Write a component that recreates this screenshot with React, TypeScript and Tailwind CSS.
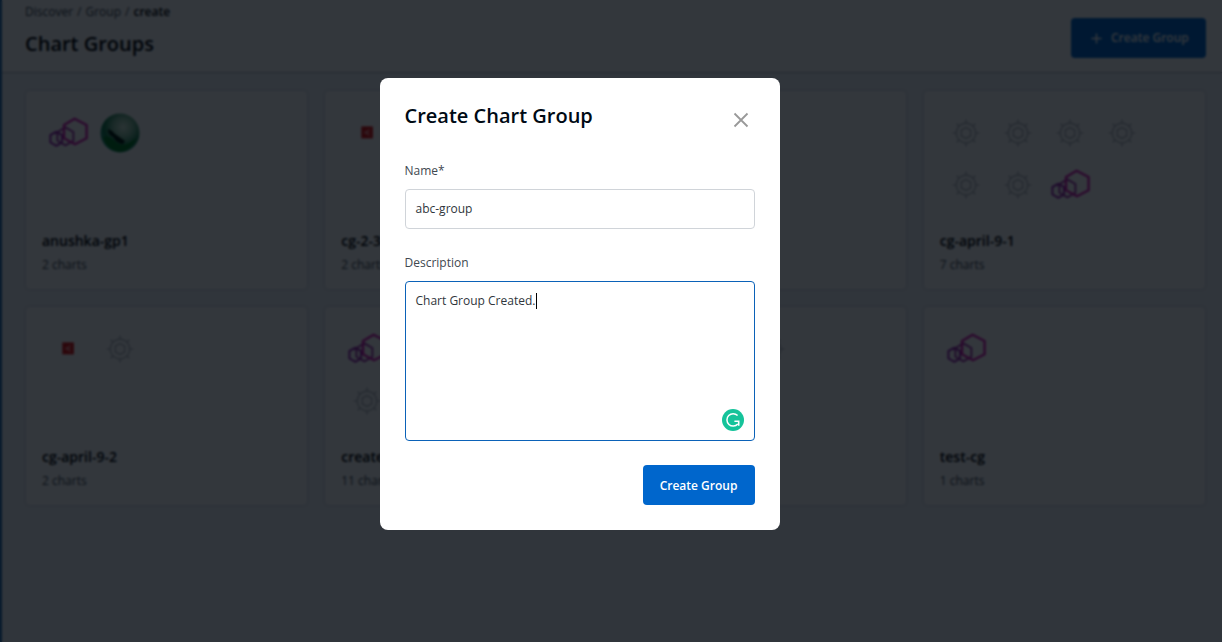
import React from "react";

type IconKind = "hex" | "globe" | "red" | "helm";

interface Group {
  id: number;
  name?: string;
  count?: number;
  icons: IconKind[];
}

const groups: Group[] = [
  { id: 1, name: "anushka-gp1", count: 2, icons: ["hex", "globe"] },
  { id: 2, name: "cg-2-3", count: 2, icons: ["red"] },
  { id: 3, icons: ["helm"] },
  { id: 4, name: "cg-april-9-1", count: 7, icons: ["helm", "helm", "helm", "helm", "helm", "helm", "hex"] },
  { id: 5, name: "cg-april-9-2", count: 2, icons: ["red", "helm"] },
  { id: 6, name: "create", count: 11, icons: ["hex", "helm", "helm", "helm", "helm"] },
  { id: 7, icons: ["helm", "helm", "helm"] },
  { id: 8, name: "test-cg", count: 1, icons: ["hex"] },
];

function HexIcon() {
  return (
    <svg viewBox="0 0 40 40" className="size-10" fill="none" strokeLinejoin="round">
      <path d="M8.4 18.8 14 22v7.4l-5.6 3.4-6-3.4V22z" stroke="#9a28b0" strokeWidth="2.1" />
      <path d="m17.4 14.4 8 4.6v8.8l-8 4.6-8-4.6V19z" stroke="#a02ca8" strokeWidth="1.9" />
      <path d="m26.6 5.8 12 6.2v13.2l-11.6 6-11-6V12z" stroke="#d818b0" strokeWidth="2.4" />
    </svg>
  );
}

function GlobeIcon() {
  return (
    <svg viewBox="0 0 40 40" className="size-10">
      <defs>
        <radialGradient id="globe" cx="0.58" cy="0.35" r="0.65">
          <stop offset="0" stopColor="#d4ecd8" />
          <stop offset="0.4" stopColor="#80ba98" />
          <stop offset="0.75" stopColor="#127a48" />
          <stop offset="1" stopColor="#2a9a80" />
        </radialGradient>
      </defs>
      <circle cx="20" cy="20" r="19.5" fill="url(#globe)" />
      <path d="M3 24q7-2 14 6 8 5 19-5-5 14-17 14Q6 37 3 24" fill="#007a20" />
      <path d="M8 16q4 1 7 5l10 7-2 3q-6 0-10-7-5-2-5-8" fill="#001808" />
    </svg>
  );
}

function RedIcon() {
  return (
    <svg viewBox="0 0 40 40" className="size-10">
      <rect x="14.3" y="13.4" width="11.6" height="12" fill="#dc1010" />
      <path d="m22.8 16.6-5 2.9 5 2.9m-5-2.9h5" stroke="#ff8a8a" fill="none" strokeWidth="1.2" />
    </svg>
  );
}

function HelmIcon() {
  return (
    <svg viewBox="0 0 40 40" className="size-10" fill="none" stroke="#acb0b8" strokeWidth="1.2">
      <circle cx="20" cy="20" r="9.8" />
      <path d="m20 14.5 4.7 2.7v5.6L20 25.5l-4.7-2.7v-5.6z" />
      <path d="M20 10V6.5M20 30v3.5M10 20H6.5M30 20h3.5M13 13l-2.4-2.4M27 13l2.4-2.4M13 27l-2.4 2.4M27 27l2.4 2.4" />
    </svg>
  );
}

function ChartIcon({ kind }: { kind: IconKind }) {
  return (
    <span className="flex size-[52px] items-center justify-center">
      {kind === "hex" && <HexIcon />}
      {kind === "globe" && <GlobeIcon />}
      {kind === "red" && <RedIcon />}
      {kind === "helm" && <HelmIcon />}
    </span>
  );
}

function GroupCard({ group }: { group: Group }) {
  return (
    <article className="flex h-[198px] flex-col rounded bg-white px-4 pt-4 pb-[14px] shadow-[0_0_3px_#b8bfd0]">
      <div className="flex h-[120px] flex-wrap content-start">
        {group.icons.map((kind, i) => (
          <ChartIcon key={i} kind={kind} />
        ))}
      </div>
      {group.name && (
        <>
          <h2 className="mt-1 text-[14px] leading-5 font-semibold text-black">{group.name}</h2>
          <p className="mt-1 text-[12px] leading-5 text-[#3b444c]">{group.count} charts</p>
        </>
      )}
    </article>
  );
}

function Page() {
  return (
    <div className="h-full border-l-2 border-[#2a70b0] bg-[#f0f3f8]">
      <header className="flex h-[73px] items-start justify-between border-b border-[#b4b8c4] bg-white pr-4 pl-[23px]">
        <div>
          <nav className="mt-[3px] flex gap-1 text-[12px] leading-[18px] text-[#3b444c]">
            <span>Discover</span>
            <span>/</span>
            <span>Group</span>
            <span>/</span>
            <span className="font-semibold text-black">create</span>
          </nav>
          <h1 className="mt-[9px] text-[20px] leading-7 font-semibold text-black">Chart Groups</h1>
        </div>
        <div className="mt-[18px] flex h-10 w-[135px] items-center rounded bg-[#0066cc] pl-5 text-[12px] font-semibold text-white">
          <svg viewBox="0 0 12 12" className="mr-[9px] size-[11px]" stroke="currentColor" strokeWidth="1.6">
            <path d="M6 0.5v11M0.5 6h11" />
          </svg>
          Create Group
        </div>
      </header>
      <main className="grid grid-cols-4 gap-[18px] pt-[18px] pr-[17px] pl-6">
        {groups.map((g) => (
          <GroupCard key={g.id} group={g} />
        ))}
      </main>
    </div>
  );
}

function Dialog() {
  return (
    <section className="flex h-[452px] w-[400px] flex-col rounded-lg bg-white px-[25px] pt-6 pb-[25px]">
      <div className="flex items-start justify-between">
        <h2 className="-ml-[0.5px] text-[20px] leading-7 font-semibold text-[#000a14]">Create Chart Group</h2>
        <button className="mt-[10px] mr-[6px]" aria-label="Close">
          <svg viewBox="0 0 16 16" className="size-4" stroke="#999999" strokeWidth="1.8">
            <path d="m1.5 1.5 13 13m0-13-13 13" />
          </svg>
        </button>
      </div>
      <label className="mt-8 -ml-[0.5px] text-[12px] leading-[18px] text-[#404850]">Name*</label>
      <div className="mt-[9px] flex h-10 shrink-0 items-center rounded border border-[#d0d4d9] px-[9.5px] text-[12px] text-[#30363c]">
        abc-group
      </div>
      <label className="mt-[25px] -ml-[0.5px] text-[12px] leading-[18px] text-[#404850]">Description</label>
      <div className="mt-[9px] flex h-40 shrink-0 flex-col justify-between rounded border border-[#0b62b8] pt-[10px] pr-[10px] pb-[9px] pl-[9.5px] text-[12px] leading-[18px] text-[#30363c]">
        <div className="flex items-center">
          Chart Group Created.
          <span className="ml-[0.6px] h-4 w-px bg-black" />
        </div>
        <svg viewBox="0 0 22 22" className="size-[22px] self-end" fill="none">
          <circle cx="11" cy="11" r="11" fill="#15c39a" />
          <path d="M15.6 6.6A6.2 6.2 0 1 0 15.8 15" stroke="white" strokeWidth="1.5" />
          <path d="M12.4 12.2h4.3v4.6" stroke="white" strokeWidth="1.6" />
        </svg>
      </div>
      <button className="mt-6 flex h-10 w-28 shrink-0 items-center justify-center self-end rounded bg-[#0066cc] pt-[2px] pr-px text-[12px] font-semibold text-white">
        Create Group
      </button>
    </section>
  );
}

export default function App() {
  return (
    <div className="relative h-[642px] w-[1222px] overflow-hidden font-['Open_Sans','Noto_Sans',sans-serif]">
      <Page />
      <div className="absolute inset-0 flex items-start justify-center bg-[rgba(0,5,11,0.8)] pt-[78px] pr-[62px] backdrop-blur-[1px]">
        <Dialog />
      </div>
    </div>
  );
}
